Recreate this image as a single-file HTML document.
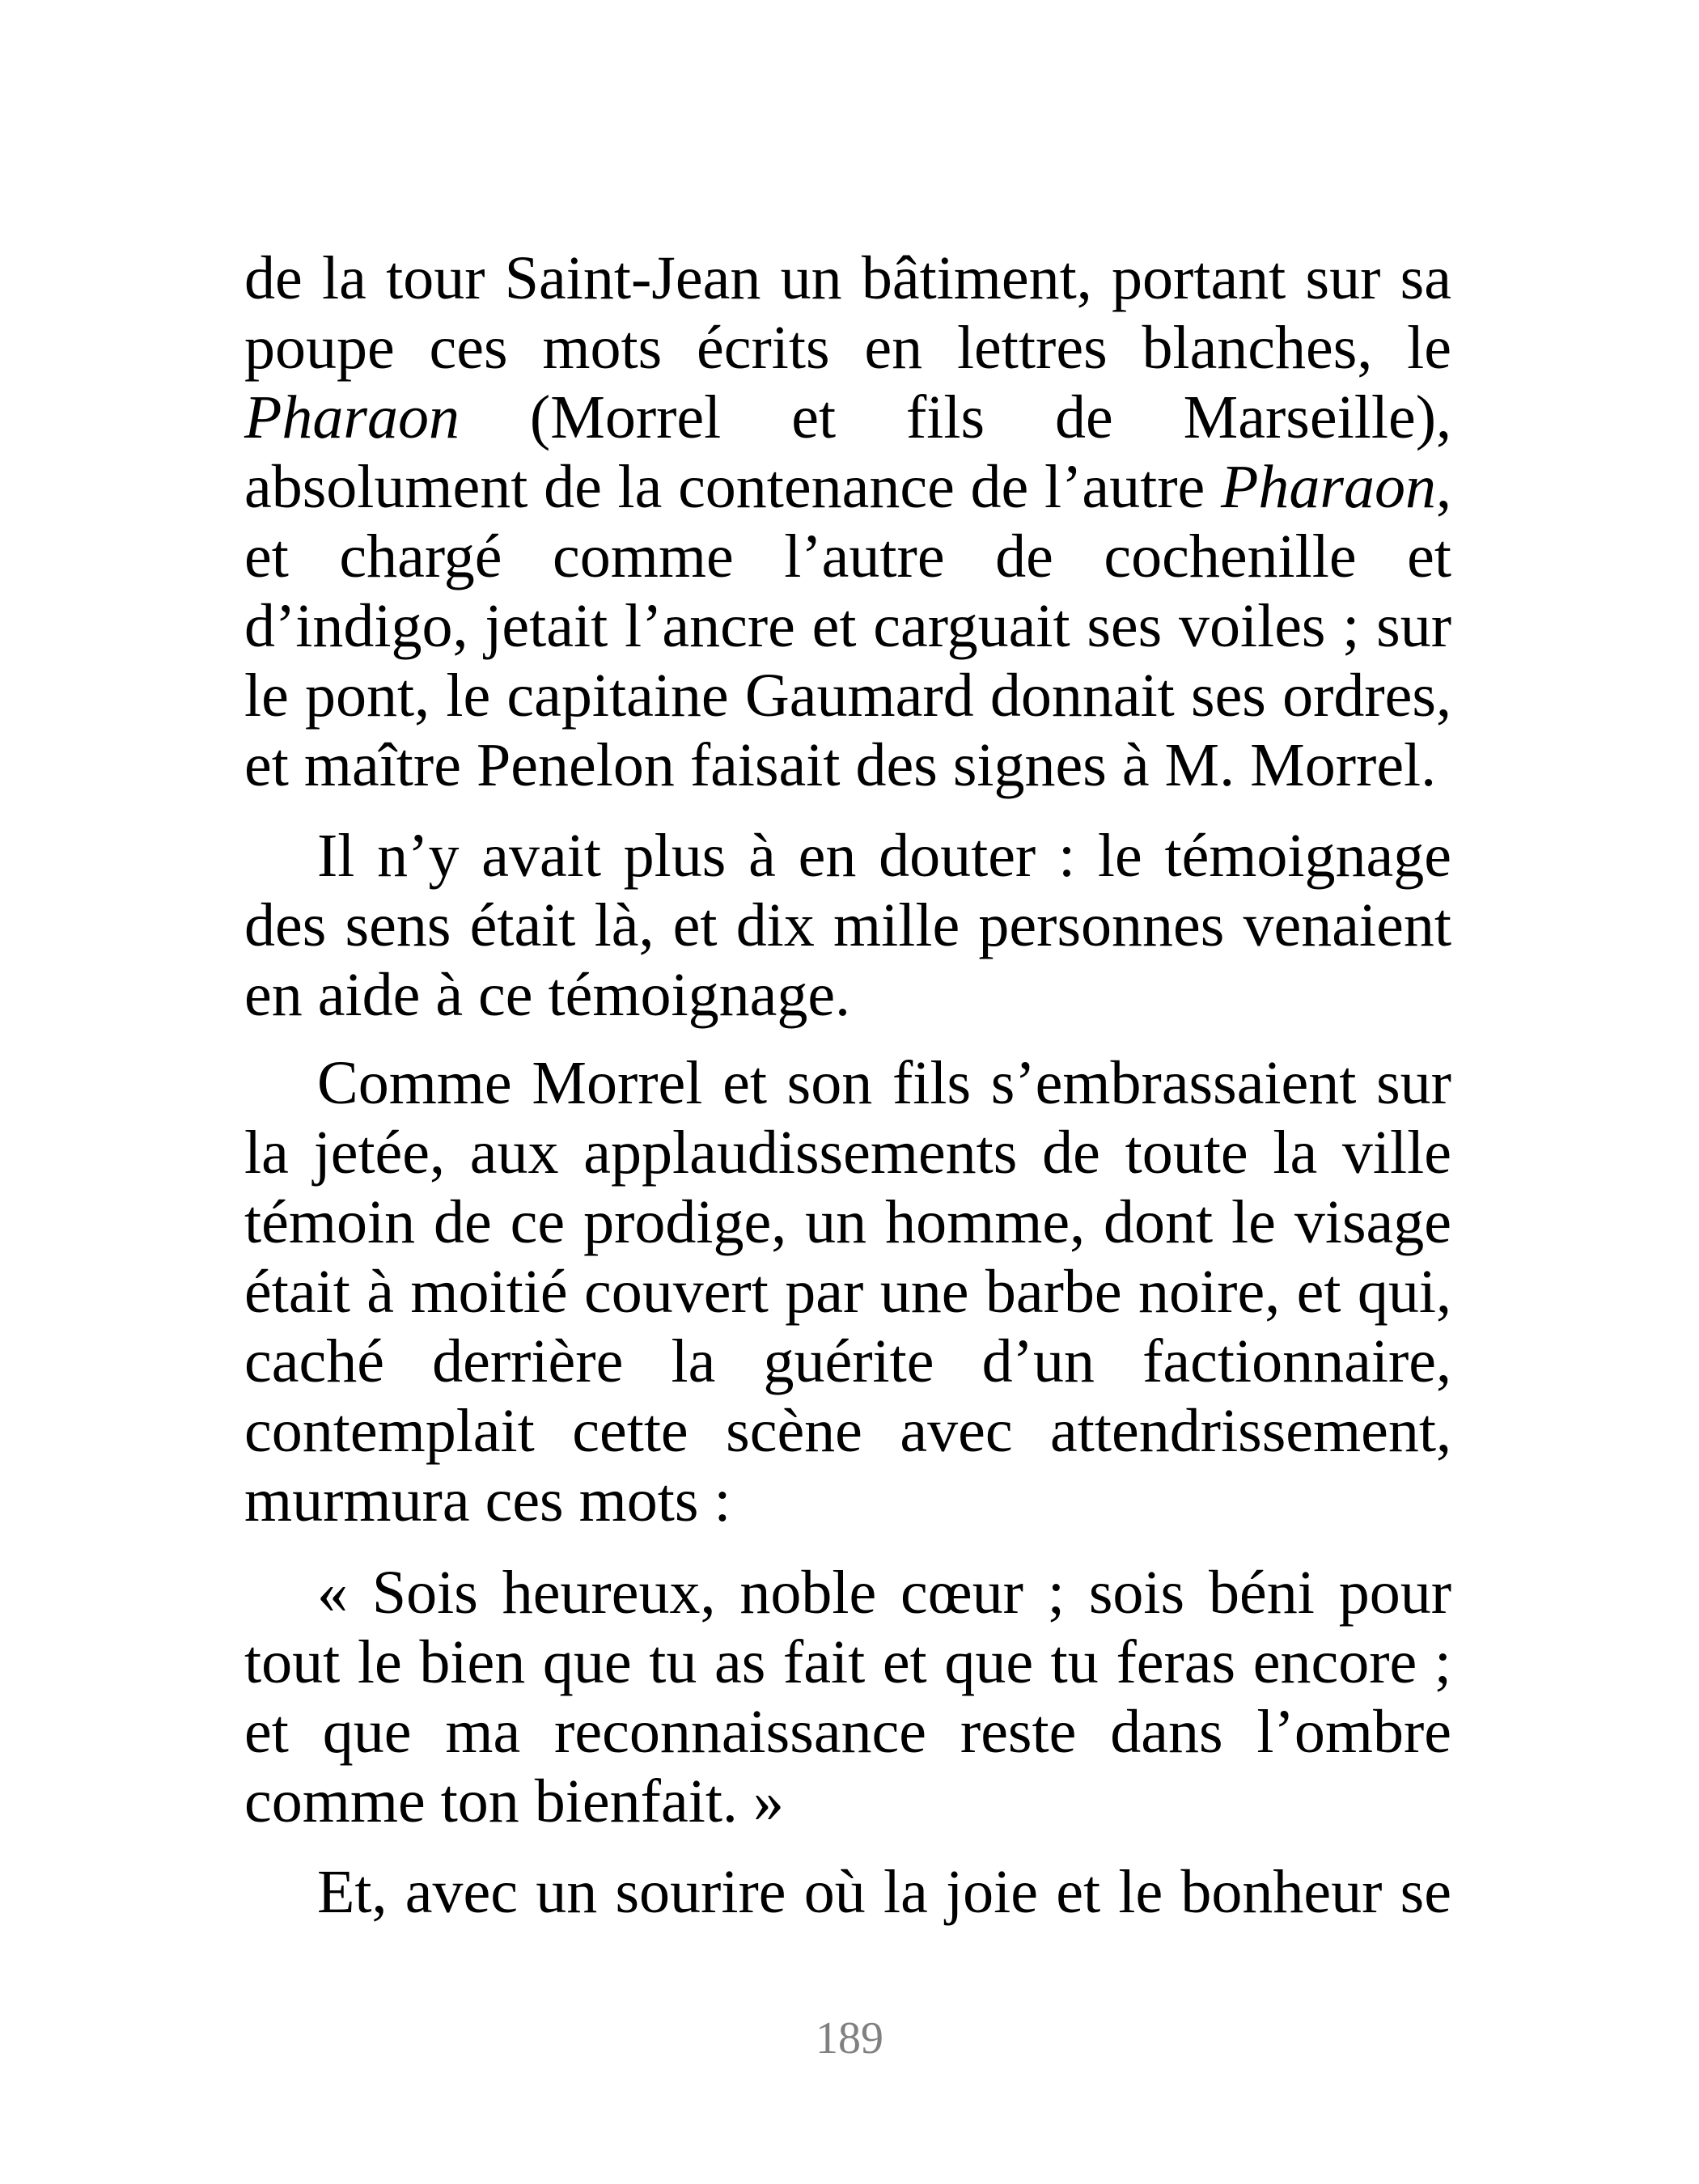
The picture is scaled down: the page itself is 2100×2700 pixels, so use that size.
<!DOCTYPE html>
<html><head><meta charset="utf-8"><style>
html,body{margin:0;padding:0;background:#fff;}
body{width:2100px;height:2700px;position:relative;overflow:hidden;}
.l{position:absolute;height:86px;line-height:86px;font-family:"Liberation Serif",serif;font-size:76px;color:#000;white-space:nowrap;text-align:justify;text-align-last:justify;}
.f{left:302px;width:1492px;}
.i{left:392px;width:1402px;}
.pn{position:absolute;left:0;width:2100px;text-align:center;top:2490px;line-height:60px;font-family:"Liberation Serif",serif;font-size:56px;color:#808080;}
</style></head><body>
<div class="l f" style="top:301px">de la tour Saint-Jean un bâtiment, portant sur sa</div>
<div class="l f" style="top:387px">poupe ces mots écrits en lettres blanches, le</div>
<div class="l f" style="top:473px"><i>Pharaon</i> (Morrel et fils de Marseille),</div>
<div class="l f" style="top:559px">absolument de la contenance de l’autre <i>Pharaon</i>,</div>
<div class="l f" style="top:645px">et chargé comme l’autre de cochenille et</div>
<div class="l f" style="top:731px">d’indigo, jetait l’ancre et carguait ses voiles ; sur</div>
<div class="l f" style="top:817px">le pont, le capitaine Gaumard donnait ses ordres,</div>
<div class="l" style="top:903px;left:302px;width:1440px">et maître Penelon faisait des signes à M. Morrel.</div>

<div class="l i" style="top:1015px">Il n’y avait plus à en douter : le témoignage</div>
<div class="l f" style="top:1101px">des sens était là, et dix mille personnes venaient</div>
<div class="l" style="top:1187px;left:302px;width:734px">en aide à ce témoignage.</div>

<div class="l i" style="top:1296px">Comme Morrel et son fils s’embrassaient sur</div>
<div class="l f" style="top:1382px">la jetée, aux applaudissements de toute la ville</div>
<div class="l f" style="top:1468px">témoin de ce prodige, un homme, dont le visage</div>
<div class="l f" style="top:1554px">était à moitié couvert par une barbe noire, et qui,</div>
<div class="l f" style="top:1640px">caché derrière la guérite d’un factionnaire,</div>
<div class="l f" style="top:1726px">contemplait cette scène avec attendrissement,</div>
<div class="l" style="top:1812px;left:302px;width:592px">murmura ces mots :</div>

<div class="l i" style="top:1926px">« Sois heureux, noble cœur ; sois béni pour</div>
<div class="l f" style="top:2012px">tout le bien que tu as fait et que tu feras encore ;</div>
<div class="l f" style="top:2098px">et que ma reconnaissance reste dans l’ombre</div>
<div class="l" style="top:2184px;left:302px;width:652px">comme ton bienfait. »</div>

<div class="l i" style="top:2296px">Et, avec un sourire où la joie et le bonheur se</div>

<div class="pn">189</div>
</body></html>
